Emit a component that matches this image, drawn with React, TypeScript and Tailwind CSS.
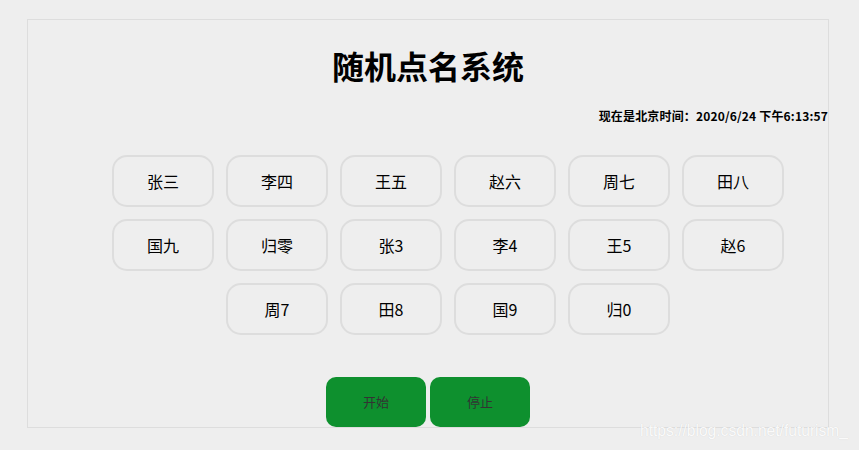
const NAMES = [
  "张三", "李四", "王五", "赵六", "周七", "田八",
  "国九", "归零", "张3", "李4", "王5", "赵6",
  "周7", "田8", "国9", "归0",
];

const FONT = { fontFamily: '"Noto Sans CJK SC", "Noto Sans", sans-serif' };

export default function App() {
  return (
    <div className="relative h-[450px] w-[859px] overflow-hidden bg-[#eeeeee] pt-[19px]" style={FONT}>
      <div className="ml-[27px] box-border h-[409px] w-[802px] border border-[#dddddd]">
        <h1 className="mt-[21px] text-center text-[32px] font-bold leading-[48px] text-black">随机点名系统</h1>
        <p className="mt-[18px] text-right text-[12px] font-bold leading-[18px] tracking-[0.17px] text-black">
          现在是北京时间：2020/6/24 下午6:13:57
        </p>

        <ul className="mt-[30px] flex flex-wrap justify-center gap-3 pl-10">
          {NAMES.map((n) => (
            <li
              key={n}
              className="box-border flex h-[52px] w-[102px] items-center justify-center rounded-[15px] border-2 border-[#dddddd] text-[16px] text-black"
            >
              {n}
            </li>
          ))}
        </ul>

        <div className="mt-[42px] flex justify-center gap-1">
          <button type="button" className="h-[50px] w-[100px] rounded-[10px] bg-[#0e902e] text-[13px] text-[#333333]">
            开始
          </button>
          <button type="button" className="h-[50px] w-[100px] rounded-[10px] bg-[#0e902e] text-[13px] text-[#333333]">
            停止
          </button>
        </div>
      </div>

      {/* watermark from the original screenshot */}
      <span
        className="absolute left-[640px] top-[421px] text-[15.6px] leading-[20px] text-white/90"
        style={{ fontFamily: '"Liberation Sans", Arial, sans-serif', textShadow: "0 0 1px rgba(0,0,0,0.15)" }}
      >
        https://blog.csdn.net/futurism_
      </span>
    </div>
  );
}
